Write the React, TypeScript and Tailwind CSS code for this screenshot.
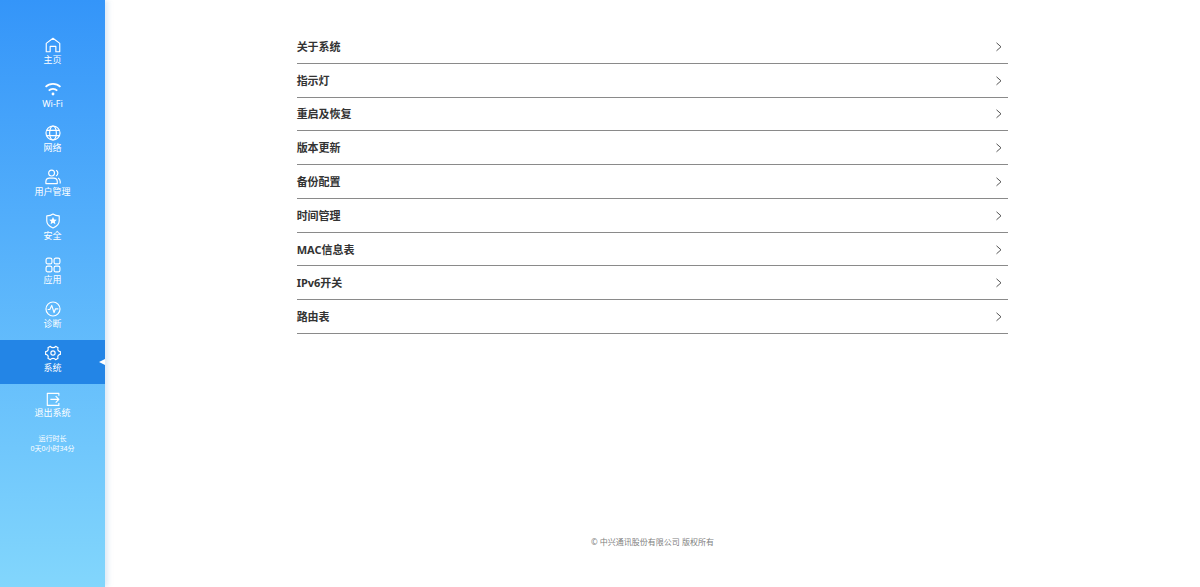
import { useState } from "react";
import type { ReactNode } from "react";

type NavItem = { id: string; label: string; icon: ReactNode };

const navItems: NavItem[] = [
  {
    id: "home",
    label: "主页",
    icon: <path d="M1.4 7.2 9 1.4l7.6 5.8v9.4h-4.4v-6H5.8v6H1.4z" />,
  },
  {
    id: "wifi",
    label: "Wi-Fi",
    icon: (
      <>
        <path d="M.6 6.6a12.2 12.2 0 0 1 16.8 0M4.2 10.8a6.8 6.8 0 0 1 9.6 0" strokeWidth="1.9" />
        <circle cx="9" cy="14.6" r="1.6" fill="currentColor" stroke="none" />
      </>
    ),
  },
  {
    id: "network",
    label: "网络",
    icon: (
      <>
        <circle cx="9" cy="9" r="7.9" />
        <ellipse cx="9" cy="9" rx="3.8" ry="7.9" />
        <path d="M2 6h14M2 12h14" />
      </>
    ),
  },
  {
    id: "users",
    label: "用户管理",
    icon: (
      <>
        <circle cx="7.4" cy="4.6" r="3.3" />
        <path d="M1 14.2c0-2.4 1.7-4 4.1-4h4.6c2.4 0 4.1 1.6 4.1 4v2.2H1z" />
        <path d="M12.4 1.4c1.3.6 2.1 1.8 2.1 3.2s-.8 2.6-2.1 3.2M14.8 10.2c1.5.8 2.3 2.2 2.3 4v2.2" />
      </>
    ),
  },
  {
    id: "security",
    label: "安全",
    icon: (
      <>
        <path d="M9 1.2c2 1.5 4.2 2 7 2v5.6c0 4-2.8 6.4-7 8-4.2-1.6-7-4-7-8V3.2c2.8 0 5-.5 7-2z" />
        <path
          d="m9 4.6 1.3 2.8 3 .3-2.2 2 .6 3L9 11.1l-2.7 1.6.6-3-2.2-2 3-.3z"
          fill="currentColor"
          stroke="none"
        />
      </>
    ),
  },
  {
    id: "apps",
    label: "应用",
    icon: (
      <>
        <rect x="1.2" y="1.2" width="6.6" height="6.6" rx="2" />
        <rect x="10.2" y="1.2" width="6.6" height="6.6" rx="2" />
        <rect x="1.2" y="10.2" width="6.6" height="6.6" rx="2" />
        <rect x="10.2" y="10.2" width="6.6" height="6.6" rx="2" />
      </>
    ),
  },
  {
    id: "diagnose",
    label: "诊断",
    icon: (
      <>
        <circle cx="9" cy="9" r="7.9" />
        <path d="M3 9.6h2.4L7.6 5l2.6 8 1.6-4.2H15" />
      </>
    ),
  },
  {
    id: "system",
    label: "系统",
    icon: (
      <>
        <path d="M6 1.5c1.2 2 4.8 2 6 0l2.7 1.6c-1 2.1.2 4.2 2.6 4.3v3.2c-2.4.1-3.6 2.2-2.6 4.3L12 16.5c-1.2-2-4.8-2-6 0l-2.7-1.6c1-2.1-.2-4.2-2.6-4.3V7.4c2.4-.1 3.6-2.2 2.6-4.3z" />
        <circle cx="9" cy="9" r="2.4" />
      </>
    ),
  },
];

const sections = [
  "关于系统",
  "指示灯",
  "重启及恢复",
  "版本更新",
  "备份配置",
  "时间管理",
  "MAC信息表",
  "IPv6开关",
  "路由表",
];

function Icon({ children }: { children: ReactNode }) {
  return (
    <svg
      width="16"
      height="16"
      viewBox="0 0 18 18"
      fill="none"
      stroke="currentColor"
      strokeWidth="1.3"
      strokeLinejoin="round"
      aria-hidden="true"
    >
      {children}
    </svg>
  );
}

function Sidebar() {
  const [active, setActive] = useState("system");

  return (
    <aside className="w-[105px] shrink-0 bg-linear-to-b from-[#3495f9] to-[#82d6fc] pt-8 text-white shadow-[3px_0_5px_rgba(120,170,215,0.25)]">
      <nav className="flex flex-col">
        {navItems.map((item) => (
          <button
            key={item.id}
            onClick={() => setActive(item.id)}
            aria-current={active === item.id ? "page" : undefined}
            className={`relative flex h-11 flex-col items-center gap-px pt-[5px] text-[9px] leading-[12px] ${
              active === item.id ? "bg-[#2385e6]" : "hover:bg-white/10"
            }`}
          >
            <Icon>{item.icon}</Icon>
            {item.label}
            {/* Pointer towards the content area */}
            {active === item.id && (
              <span className="absolute right-0 top-1/2 h-0 w-0 -translate-y-1/2 border-y-[3px] border-r-[6px] border-y-transparent border-r-white" />
            )}
          </button>
        ))}
        <button className="flex h-11 flex-col items-center pt-[7px] text-[9px] leading-[12px] hover:bg-white/10">
          <Icon>
            <path d="M15.6 5.4V2.6H2.6v13.6h13V13.4M6 9.4h9.6M12 5.8l3.6 3.6L12 13" />
          </Icon>
          退出系统
        </button>
      </nav>

      <div className="mt-[6px] text-center text-[7px] leading-[10px]">
        <p>运行时长</p>
        <p>0天0小时34分</p>
      </div>
    </aside>
  );
}

export default function App() {
  return (
    <div className="flex min-h-screen bg-white font-['Noto_Sans','Noto_Sans_CJK_SC',sans-serif]">
      <Sidebar />

      <main className="flex flex-1 flex-col items-center pt-[30px]">
        <ul className="grid min-h-[304px] w-[65%] auto-rows-fr">
          {sections.map((title) => (
            <li key={title} className="flex border-b border-[#8a8a8a]">
              <button className="flex flex-1 items-center justify-between pt-px pr-[5px] text-left text-[11px] leading-4 font-bold text-[#333]">
                {title}
                <svg
                  width="8"
                  height="10"
                  viewBox="0 0 8 10"
                  fill="none"
                  stroke="#555"
                  strokeWidth="1"
                  aria-hidden="true"
                >
                  <path d="m1.5.8 4.5 4-4.5 4" />
                </svg>
              </button>
            </li>
          ))}
        </ul>

        <footer className="mt-auto pb-[39px] text-[8px] leading-3 text-[#808080]">
          © 中兴通讯股份有限公司 版权所有
        </footer>
      </main>
    </div>
  );
}
